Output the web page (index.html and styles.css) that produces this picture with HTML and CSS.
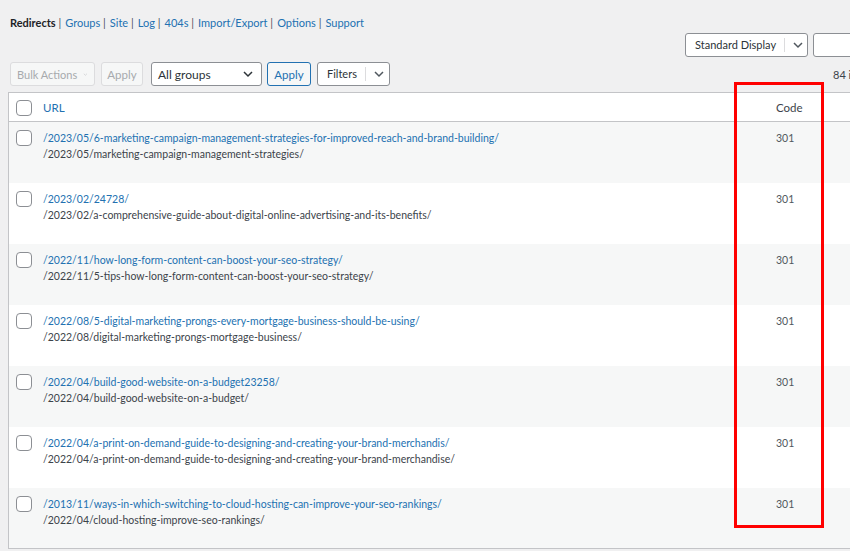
FILE: index.html
```html
<!DOCTYPE html>
<html>
<head>
    <link rel="stylesheet" href="styles.css">
</head>
<body>
    <div class="wrap">
        <ul class="subsubsub">
            <li><span class="current">Redirects</span> |</li>
            <li><a href="#">Groups</a> |</li>
            <li><a href="#">Site</a> |</li>
            <li><a href="#">Log</a> |</li>
            <li><a href="#">404s</a> |</li>
            <li><a href="#">Import/Export</a> |</li>
            <li><a href="#">Options</a> |</li>
            <li><a href="#">Support</a></li>
        </ul>

        <div class="display-row">
            <div class="split-btn display-btn">
                <span class="split-label">Standard Display</span>
                <span class="split-arrow">
                    <svg width="12" height="12" viewBox="0 0 12 12"><polyline points="2,4 6,8 10,4" fill="none" stroke="#50575e" stroke-width="1.5"/></svg>
                </span>
            </div>
            <input type="text" class="search-input">
        </div>

        <div class="tablenav">
            <div class="tablenav-left">
                <div class="select disabled"><span>Bulk Actions</span>
                    <svg width="9" height="9" viewBox="0 0 12 12"><polyline points="2,4 6,8 10,4" fill="none" stroke="#c3c4c7" stroke-width="1.5"/></svg>
                </div>
                <button class="button disabled">Apply</button>
                <div class="select groups"><span>All groups</span>
                    <svg width="12" height="12" viewBox="0 0 12 12"><polyline points="2,4 6,8 10,4" fill="none" stroke="#2c3338" stroke-width="1.5"/></svg>
                </div>
                <button class="button active">Apply</button>
                <div class="split-btn filters-btn">
                    <span class="split-label">Filters</span>
                    <span class="split-arrow">
                        <svg width="12" height="12" viewBox="0 0 12 12"><polyline points="2,4 6,8 10,4" fill="none" stroke="#50575e" stroke-width="1.5"/></svg>
                    </span>
                </div>
            </div>
            <div class="displaying-num">84 items</div>
        </div>

        <table class="redirects">
            <thead>
                <tr>
                    <th class="check-col"><span class="checkbox"></span></th>
                    <th class="url-col"><a href="#">URL</a></th>
                    <th class="code-col">Code</th>
                    <th class="rest-col"></th>
                </tr>
            </thead>
            <tbody>
                <tr>
                    <td class="check-col"><span class="checkbox"></span></td>
                    <td class="url-col"><a href="#">/2023/05/6-marketing-campaign-management-strategies-for-improved-reach-and-brand-building/</a><div class="target">/2023/05/marketing-campaign-management-strategies/</div></td>
                    <td class="code-col">301</td>
                    <td></td>
                </tr>
                <tr>
                    <td class="check-col"><span class="checkbox"></span></td>
                    <td class="url-col"><a href="#">/2023/02/24728/</a><div class="target">/2023/02/a-comprehensive-guide-about-digital-online-advertising-and-its-benefits/</div></td>
                    <td class="code-col">301</td>
                    <td></td>
                </tr>
                <tr>
                    <td class="check-col"><span class="checkbox"></span></td>
                    <td class="url-col"><a href="#">/2022/11/how-long-form-content-can-boost-your-seo-strategy/</a><div class="target">/2022/11/5-tips-how-long-form-content-can-boost-your-seo-strategy/</div></td>
                    <td class="code-col">301</td>
                    <td></td>
                </tr>
                <tr>
                    <td class="check-col"><span class="checkbox"></span></td>
                    <td class="url-col"><a href="#">/2022/08/5-digital-marketing-prongs-every-mortgage-business-should-be-using/</a><div class="target">/2022/08/digital-marketing-prongs-mortgage-business/</div></td>
                    <td class="code-col">301</td>
                    <td></td>
                </tr>
                <tr>
                    <td class="check-col"><span class="checkbox"></span></td>
                    <td class="url-col"><a href="#">/2022/04/build-good-website-on-a-budget23258/</a><div class="target">/2022/04/build-good-website-on-a-budget/</div></td>
                    <td class="code-col">301</td>
                    <td></td>
                </tr>
                <tr>
                    <td class="check-col"><span class="checkbox"></span></td>
                    <td class="url-col"><a href="#">/2022/04/a-print-on-demand-guide-to-designing-and-creating-your-brand-merchandis/</a><div class="target">/2022/04/a-print-on-demand-guide-to-designing-and-creating-your-brand-merchandise/</div></td>
                    <td class="code-col">301</td>
                    <td></td>
                </tr>
                <tr>
                    <td class="check-col"><span class="checkbox"></span></td>
                    <td class="url-col"><a href="#">/2013/11/ways-in-which-switching-to-cloud-hosting-can-improve-your-seo-rankings/</a><div class="target">/2022/04/cloud-hosting-improve-seo-rankings/</div></td>
                    <td class="code-col">301</td>
                    <td></td>
                </tr>
            </tbody>
        </table>

        <div class="highlight-box"></div>
    </div>
</body>
</html>
```

FILE: styles.css
```css
body {
    margin: 0;
    background: #f0f0f1;
    font-family: Lato, "Noto Sans", sans-serif;
    font-size: 12px;
    color: #3c434a;
    overflow: hidden;
}

a {
    color: #2271b1;
    text-decoration: none;
}

.wrap {
    position: relative;
    width: 960px;
    padding-left: 8px;
}

/* top tabs */
.subsubsub {
    list-style: none;
    margin: 0;
    padding: 14px 0 0 2px;
    display: flex;
    gap: 4px;
    color: #50575e;
    font-size: 11px;
    line-height: 18px;
}

.subsubsub li {
    white-space: pre;
}

.subsubsub .current {
    color: #1d2327;
    font-weight: 700;
}

/* display + search */
.display-row {
    display: flex;
    gap: 5px;
    margin-top: 1px;
    padding-left: 677px;
    height: 24px;
}

.split-btn {
    display: flex;
    align-items: center;
    box-sizing: border-box;
    height: 24px;
    border: 1px solid #8c8f94;
    border-radius: 3px;
    background: #fff;
    color: #2c3338;
    font-size: 11px;
    white-space: nowrap;
}

.split-label {
    padding: 0 8px 0 9px;
    border-right: 1px solid #dcdcde;
    line-height: 14px;
}

.split-arrow {
    display: flex;
    align-items: center;
    padding: 0 6px 0 7px;
}

.display-btn {
    width: 123px;
}

.display-btn .split-label {
    flex: 1;
}

.search-input {
    width: 100px;
    height: 24px;
    box-sizing: border-box;
    border: 1px solid #8c8f94;
    border-radius: 3px;
    background: #fff;
    margin: 0;
}

/* bulk actions row */
.tablenav {
    display: flex;
    align-items: center;
    margin-top: 5px;
    height: 24px;
    width: 865px;
}

.tablenav-left {
    display: flex;
    align-items: center;
    gap: 6px;
    padding-left: 2px;
}

.select {
    display: flex;
    align-items: center;
    justify-content: space-between;
    box-sizing: border-box;
    height: 24px;
    padding: 0 7px 0 6px;
    border: 1px solid #8c8f94;
    border-radius: 3px;
    background: #fff;
    color: #2c3338;
    font-size: 11.5px;
    white-space: nowrap;
}

.select.disabled {
    width: 85px;
    padding: 0 6px 0 6px;
    justify-content: flex-start;
    gap: 6px;
    border-color: #dcdcde;
    background: #f6f7f7;
    color: #a7aaad;
    font-size: 11px;
}

.select.groups {
    width: 111px;
    margin-left: 2px;
    font-size: 12px;
}

.button {
    box-sizing: border-box;
    height: 24px;
    padding: 0;
    border: 1px solid #2271b1;
    border-radius: 3px;
    background: #f6f7f7;
    color: #2271b1;
    font-family: inherit;
    font-size: 11.5px;
}

.button.disabled {
    border-color: #dcdcde;
    color: #a7aaad;
    width: 42px;
}

.button.active {
    width: 44px;
    margin-left: -1px;
}

.filters-btn {
    width: 73px;
}

.filters-btn .split-label {
    flex: 1;
}

.displaying-num {
    margin-left: auto;
    font-size: 11px;
    color: #3c434a;
    width: 40px;
    white-space: nowrap;
}

/* table */
.redirects {
    margin-top: 6px;
    width: 952px;
    border-collapse: collapse;
    table-layout: fixed;
    background: #fff;
    border: 1px solid #c3c4c7;
}

.redirects thead tr {
    height: 29px;
}

.redirects th {
    padding: 1px 0 0;
    text-align: left;
    font-weight: 400;
    font-size: 11.5px;
    border-bottom: 1px solid #c3c4c7;
}

.redirects tbody tr {
    height: 61px;
}

.redirects td {
    padding: 0;
    vertical-align: top;
    font-size: 10.5px;
    line-height: 16px;
}

.redirects tbody tr:nth-child(odd) {
    background: #f6f7f7;
}

.check-col {
    width: 34px;
}

.url-col {
    width: 733px;
}

.code-col {
    width: 60px;
    color: #50575e;
}

.redirects th.code-col {
    color: #3c434a;
}

.redirects td.url-col,
.redirects td.code-col,
.redirects td.check-col {
    padding-top: 8px;
}

.checkbox {
    display: block;
    width: 14px;
    height: 14px;
    margin-left: 7px;
    border: 1px solid #8c8f94;
    border-radius: 4px;
    background: #fff;
}

.target {
    color: #3c434a;
}

/* annotation overlay */
.highlight-box {
    position: absolute;
    left: 734px;
    top: 82px;
    width: 84px;
    height: 440px;
    border: 3px solid #f00;
}
```
